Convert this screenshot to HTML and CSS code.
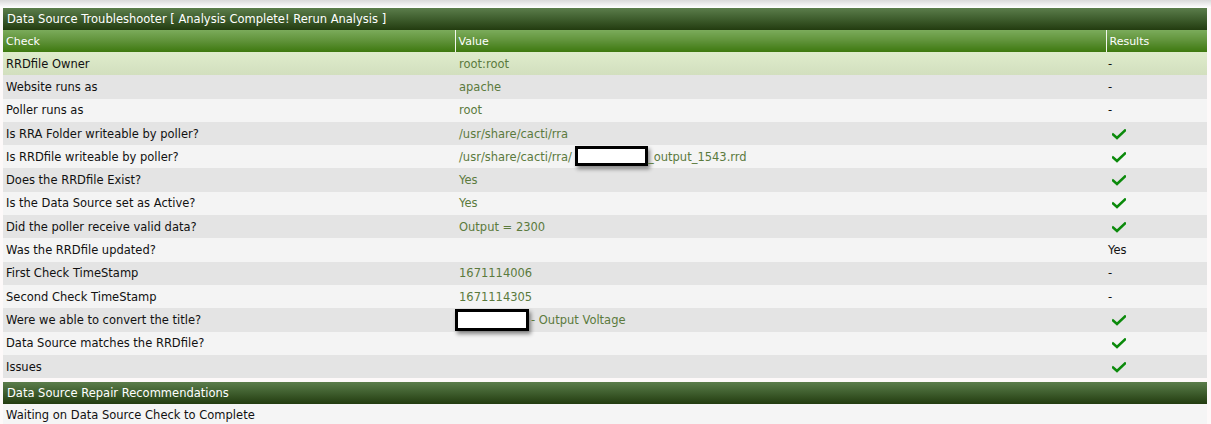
FILE: index.html
```html
<!DOCTYPE html>
<html lang="en">
<head>
    <meta charset="UTF-8">
    <title>Data Source Troubleshooter</title>
    <link rel="stylesheet" href="styles.css">
</head>
<body>
    <div class="topbar"></div>

    <div class="panel">
        <div class="panel-title">Data Source Troubleshooter [ Analysis Complete! Rerun Analysis ]</div>
        <table class="checks">
            <colgroup>
                <col class="c-check">
                <col class="c-value">
                <col class="c-result">
            </colgroup>
            <thead>
                <tr>
                    <th>Check</th>
                    <th>Value</th>
                    <th>Results</th>
                </tr>
            </thead>
            <tbody>
                <tr class="selected"><td>RRDfile Owner</td><td class="val">root:root</td><td>-</td></tr>
                <tr class="odd"><td>Website runs as</td><td class="val">apache</td><td>-</td></tr>
                <tr class="even"><td>Poller runs as</td><td class="val">root</td><td>-</td></tr>
                <tr class="odd"><td>Is RRA Folder writeable by poller?</td><td class="val">/usr/share/cacti/rra</td><td><span class="ok"></span></td></tr>
                <tr class="even"><td>Is RRDfile writeable by poller?</td><td class="val">/usr/share/cacti/rra/<span class="redact r1"></span>_output_1543.rrd</td><td><span class="ok"></span></td></tr>
                <tr class="odd"><td>Does the RRDfile Exist?</td><td class="val">Yes</td><td><span class="ok"></span></td></tr>
                <tr class="even"><td>Is the Data Source set as Active?</td><td class="val">Yes</td><td><span class="ok"></span></td></tr>
                <tr class="odd"><td>Did the poller receive valid data?</td><td class="val">Output = 2300</td><td><span class="ok"></span></td></tr>
                <tr class="even"><td>Was the RRDfile updated?</td><td class="val"></td><td>Yes</td></tr>
                <tr class="odd"><td>First Check TimeStamp</td><td class="val">1671114006</td><td>-</td></tr>
                <tr class="even"><td>Second Check TimeStamp</td><td class="val">1671114305</td><td>-</td></tr>
                <tr class="odd"><td>Were we able to convert the title?</td><td class="val"><span class="redact r2"></span>- Output Voltage</td><td><span class="ok"></span></td></tr>
                <tr class="even"><td>Data Source matches the RRDfile?</td><td class="val"></td><td><span class="ok"></span></td></tr>
                <tr class="odd"><td>Issues</td><td class="val"></td><td><span class="ok"></span></td></tr>
            </tbody>
        </table>
    </div>

    <div class="panel repair">
        <div class="panel-title">Data Source Repair Recommendations</div>
        <div class="note">Waiting on Data Source Check to Complete</div>
    </div>

    <svg width="0" height="0" style="position:absolute">
        <defs>
            <symbol id="tick" viewBox="0 0 14 11">
                <path d="M1 5.5 L5 9 L13 1.5" fill="none" stroke="#0b8a0b" stroke-width="2.6" stroke-linecap="square"/>
            </symbol>
        </defs>
    </svg>

    <script>
        document.querySelectorAll(".ok").forEach(function (el) {
            el.innerHTML = '<svg width="14" height="11"><use href="#tick"></use></svg>';
        });
    </script>
</body>
</html>
```

FILE: styles.css
```css
body {
    margin: 0;
    padding: 0;
    background: #fdf9f9;
    font-family: 'DejaVu Sans', Verdana, sans-serif;
    font-size: 11.5px;
    color: #111;
}

.topbar {
    height: 8px;
    background: linear-gradient(#d9d9d9, #f4f4f4 70%, #ffffff);
}

.panel {
    margin: 0 4px 0 3px;
    background: #f5f5f5;
}

.panel-title {
    height: 22px;
    line-height: 23px;
    padding-left: 4px;
    color: #ffffff;
    background: linear-gradient(#5b7d4b, #3e5d2d 50%, #233c10);
}

.checks {
    width: 100%;
    border-collapse: collapse;
    table-layout: fixed;
}

.c-check { width: 452px; }
.c-result { width: 101px; }

.checks th {
    height: 22px;
    padding: 0 0 0 3px;
    text-align: left;
    font-weight: normal;
    font-size: 11px;
    color: #ffffff;
    background: linear-gradient(#7bab5b, #5f9239 50%, #3e790f);
}

.checks th + th {
    border-left: 1px solid #f2f7ee;
}

.checks td {
    height: 23.3px;
    padding: 0 0 0 3px;
    white-space: nowrap;
}

.checks td.val {
    padding-left: 4px;
    color: #5b7a3d;
}

.checks td:last-child {
    padding-left: 2px;
}

.checks tr.selected td {
    background: linear-gradient(#dfeccc, #d2dfbe);
}

.odd td { background: #e4e4e4; }
.even td { background: #f4f4f4; }

.ok {
    display: inline-block;
    margin-left: 4px;
    vertical-align: middle;
}

.ok svg { display: block; }

.redact {
    display: inline-block;
    vertical-align: middle;
    box-sizing: border-box;
    background: #ffffff;
    border: 3px solid #000000;
    box-shadow: 2px 3px 4px rgba(0, 0, 0, 0.45);
}

.r1 {
    width: 73px;
    height: 20px;
    margin: -2px 0 0 3px;
}

.r2 {
    width: 74px;
    height: 22px;
    margin: 0 2px 0 -4px;
}

.repair {
    margin-top: 4px;
}

.note {
    height: 20px;
    line-height: 22px;
    padding-left: 3px;
}
```
